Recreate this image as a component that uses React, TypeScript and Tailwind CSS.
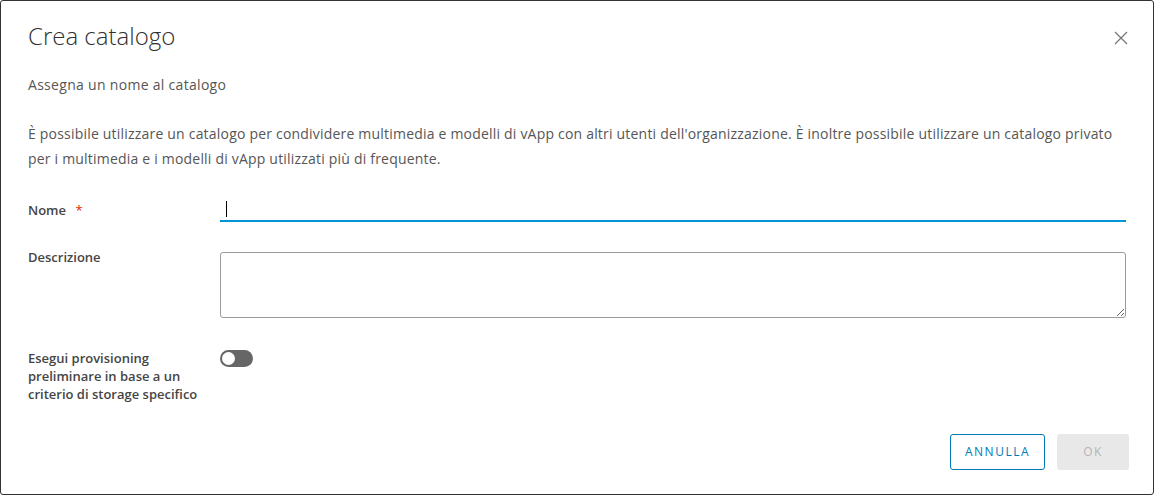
import React from "react";

const App = () => {
  return (
    <div
      className="w-[1154px] h-[495px] bg-white border border-[#333] rounded-[3px] flex flex-col px-[27px] text-[#565656]"
      style={{ fontFamily: "'Open Sans', Lato, sans-serif" }}
    >
      <div className="flex items-start justify-between pt-[19px]">
        <h1 className="text-[24px] leading-[32px] font-light text-[#313131]">Crea catalogo</h1>
        <button className="mt-[10px] mr-[-3px] w-[16px] h-[16px] text-[#747474]">
          <svg viewBox="0 0 16 16" width="16" height="16" fill="none" stroke="currentColor" strokeWidth="1.2">
            <path d="M2 2 L14 14 M14 2 L2 14" />
          </svg>
        </button>
      </div>

      <p className="mt-[21px] text-[14px] tracking-[0.3px] leading-[24px]">Assegna un nome al catalogo</p>

      <p className="mt-[24px] text-[14px] tracking-[0.2px] leading-[25px]">
        È possibile utilizzare un catalogo per condividere multimedia e modelli di vApp con altri utenti
        dell'organizzazione. È inoltre possibile utilizzare un catalogo privato
        <br />
        per i multimedia e i modelli di vApp utilizzati più di frequente.
      </p>

      <div className="mt-[26px] flex">
        <div className="w-[192px] text-[13px] font-semibold text-[#454545] leading-[20px] pt-[3px]">
          Nome <span className="text-[#e62700] ml-[6px] font-normal">*</span>
        </div>
        <div className="flex-1 h-[25px] border-b-2 border-[#0095d3] flex items-center pl-[6px]">
          <span className="w-[1px] h-[16px] bg-black" />
        </div>
      </div>

      <div className="mt-[30px] flex">
        <div className="w-[192px] text-[13px] font-semibold text-[#454545] leading-[18px] -mt-[4px]">Descrizione</div>
        <textarea className="flex-1 h-[66px] border border-[#9a9a9a] rounded-[3px] resize-y outline-none" />
      </div>

      <div className="mt-[31px] flex">
        <div className="w-[192px] text-[13px] font-semibold text-[#454545] leading-[18px] pr-[14px]">
          Esegui provisioning preliminare in base a un criterio di storage specifico
        </div>
        <div className="w-[33px] h-[17px] rounded-full bg-[#666] p-[2px] mt-[1px]">
          <div className="w-[13px] h-[13px] rounded-full bg-white" />
        </div>
      </div>

      <div className="mt-auto mb-[24px] flex justify-end gap-[12px] mr-[-3px]">
        <button className="h-[36px] w-[95px] border border-[#0079b8] rounded-[3px] text-[#0079b8] text-[12px] tracking-[1.5px] font-medium">
          ANNULLA
        </button>
        <button className="h-[36px] w-[72px] rounded-[3px] bg-[#e8e8e8] text-[#b5b5b5] text-[12px] tracking-[1.5px] font-medium">
          OK
        </button>
      </div>
    </div>
  );
};

export default App;
